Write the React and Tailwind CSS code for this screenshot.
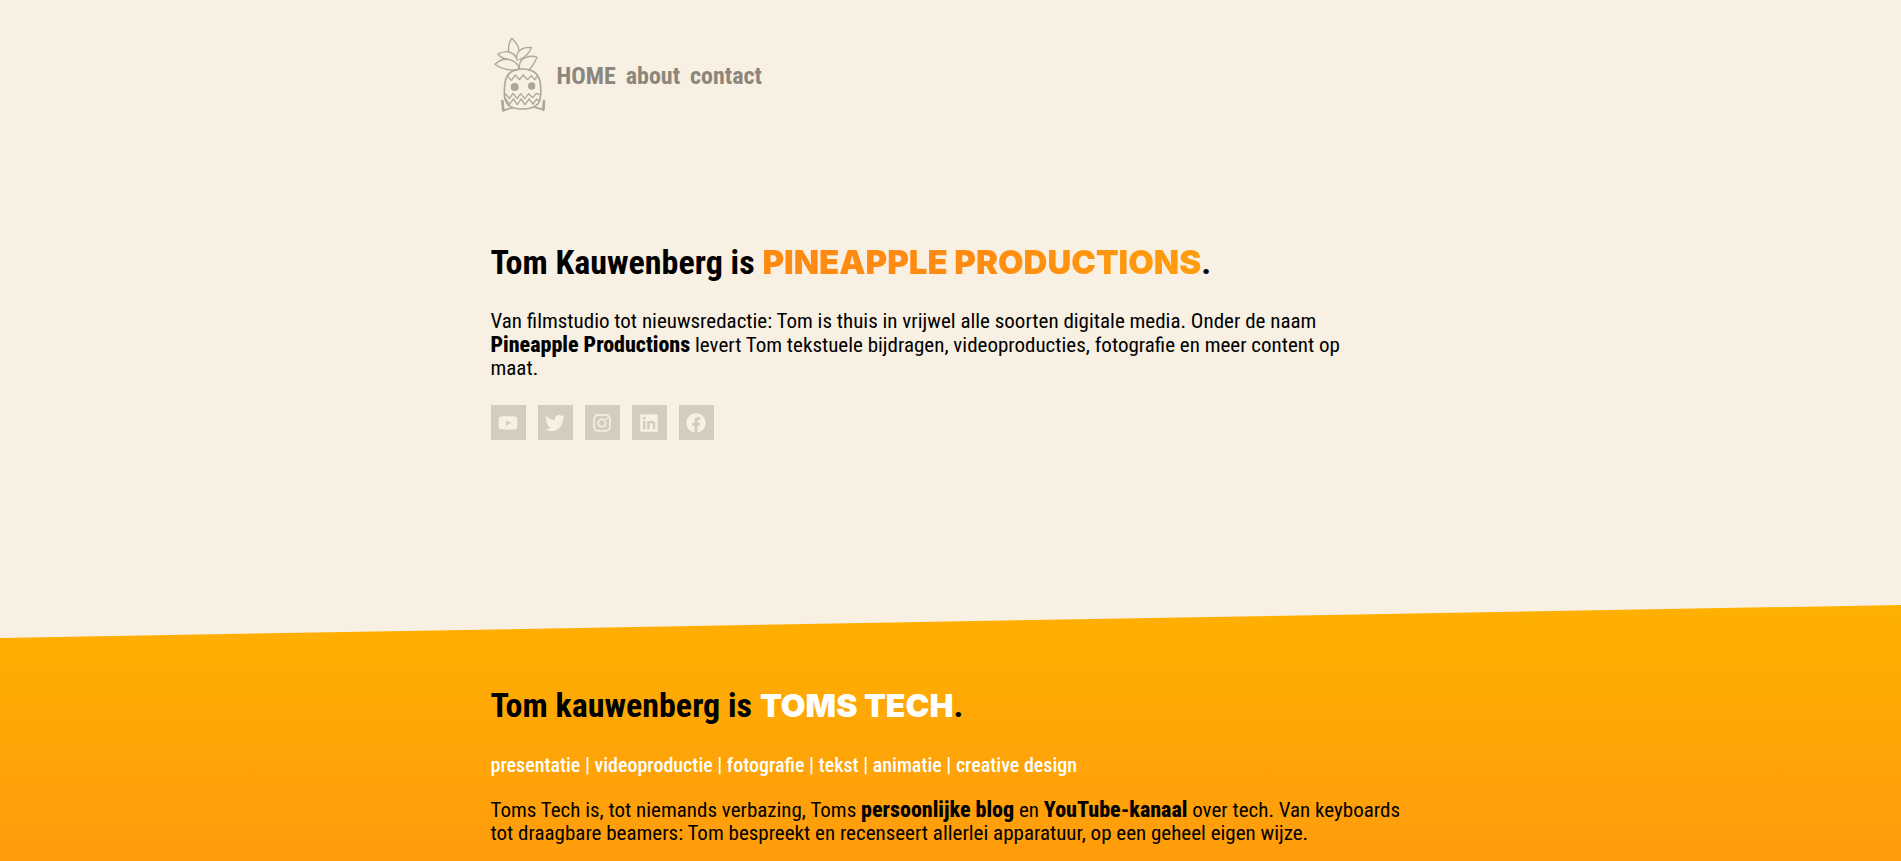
import React from "react";
import { FaTwitter, FaYoutube, FaInstagram, FaLinkedin, FaFacebook } from "react-icons/fa";

const socials = [
  { label: "YouTube", Icon: FaYoutube },
  { label: "Twitter", Icon: FaTwitter },
  { label: "Instagram", Icon: FaInstagram },
  { label: "LinkedIn", Icon: FaLinkedin },
  { label: "Facebook", Icon: FaFacebook },
];

function PineappleLogo() {
  return (
    <svg
      viewBox="42 36 156 225"
      className="h-[75px] w-[52px]"
      fill="none"
      stroke="#aca69b"
      strokeWidth="4"
      strokeLinecap="round"
      strokeLinejoin="round"
      aria-hidden="true"
    >
      <path d="M86 80C84 66 87 52 95 40C106 50 116 62 117 77" />
      <path d="M54 87C66 80 76 78 87 81C100 84 108 92 112 106M54 87C62 98 74 103 88 104" />
      <path d="M118 132C115 118 106 109 89 104C72 100 57 106 45 118C62 132 88 136 110 136" />
      <path d="M110 98C108 88 116 77 128 71C136 67 145 67 154 67C149 83 136 96 119 104" />
      <path d="M118 130C117 112 126 101 138 97C149 93 160 92 171 97C164 113 156 126 146 136" />
      <path
        d="M127 132C158 132 177 144 181 175C184 200 184 222 174 236C164 248 146 252 126 252C104 252 88 246 80 234C71 220 72 196 75 174C79 144 98 132 127 132Z"
        strokeWidth="5"
      />
      <path d="M83 154L94 166L106 150L118 164L130 150L142 164L154 152L164 164L172 153" />
      <path d="M77 207L88 221L99 205L111 221L122 206L134 221L146 206L158 218L169 205L180 209" />
      <path d="M78 222L88 238L100 222L112 239L123 222L135 239L147 222L159 237L170 222L177 228" />
      <circle cx="104" cy="186" r="12" fill="#aca69b" stroke="none" />
      <circle cx="155" cy="183" r="11" fill="#aca69b" stroke="none" />
      <path d="M67 228L70 256L98 248" strokeWidth="5" />
      <path d="M67 228L70 256" strokeWidth="8" />
      <path d="M192 228L190 254L166 247" strokeWidth="5" />
      <path d="M192 228L190 254" strokeWidth="8" />
    </svg>
  );
}

export default function App() {
  return (
    <div className="flex min-h-screen flex-col bg-[#f8f0e2] font-['Roboto_Condensed','Roboto',sans-serif] text-[21px] leading-[23px] text-black">
      <header className="mx-auto w-full max-w-[920px] pt-[37px]">
        <nav aria-label="Main" className="flex items-center gap-[11px] text-[24px] font-bold text-[#8c867c]">
          <a href="#home" aria-label="Pineapple Productions" className="pl-[3px]">
            <PineappleLogo />
          </a>
          <div className="flex gap-2.5 pt-1">
            <a href="#home">HOME</a>
            <a href="#about">about</a>
            <a href="#contact">contact</a>
          </div>
        </nav>
      </header>

      <section className="mx-auto w-full max-w-[920px] pt-[130px] pb-[165px]">
        <h1 className="text-[34px] leading-10 font-bold">
          Tom Kauwenberg is{" "}
          <span className="bg-linear-to-r from-[#ff8a12] via-[#ff8c12] to-[#ff9d0c] bg-clip-text font-['Inter',sans-serif] text-[33px] font-black text-transparent">
            PINEAPPLE PRODUCTIONS
          </span>
          .
        </h1>
        <p className="mt-7">
          Van filmstudio tot nieuwsredactie: Tom is thuis in vrijwel alle soorten digitale media. Onder de naam{" "}
          <strong className="text-[22px] font-extrabold whitespace-nowrap">Pineapple Productions</strong> levert Tom
          tekstuele bijdragen, videoproducties, fotografie en meer content op
          <br />
          maat.
        </p>
        <ul className="mt-[25px] flex gap-3">
          {socials.map(({ label, Icon }) => (
            <li key={label}>
              <a href={`#${label.toLowerCase()}`} aria-label={label} className="flex size-[35px] items-center justify-center bg-[#d4ccbd] text-[#f8f0e2]">
                <Icon size={20} />
              </a>
            </li>
          ))}
        </ul>
      </section>

      <section className="flex-1 bg-linear-to-b from-[#ffb000] to-[#ff9c0c] pt-20 pb-4 [clip-path:polygon(0_33px,100%_0,100%_100%,0_100%)]">
        <div className="mx-auto w-full max-w-[920px]">
          <h2 className="text-[34px] leading-10 font-bold">
            Tom kauwenberg is{" "}
            <span className="font-['Inter',sans-serif] text-[32px] font-black text-white">TOMS TECH</span>.
          </h2>
          <p className="mt-7 text-[20px] font-medium text-white">
            presentatie | videoproductie | fotografie | tekst | animatie | creative design
          </p>
          <p className="mt-[21px]">
            Toms Tech is, tot niemands verbazing, Toms{" "}
            <strong className="text-[22px] font-extrabold">persoonlijke blog</strong> en{" "}
            <strong className="text-[22px] font-extrabold">YouTube-kanaal</strong> over tech. Van keyboards tot draagbare
            beamers: Tom bespreekt en recenseert allerlei apparatuur, op een geheel eigen wijze.
          </p>
        </div>
      </section>
    </div>
  );
}
